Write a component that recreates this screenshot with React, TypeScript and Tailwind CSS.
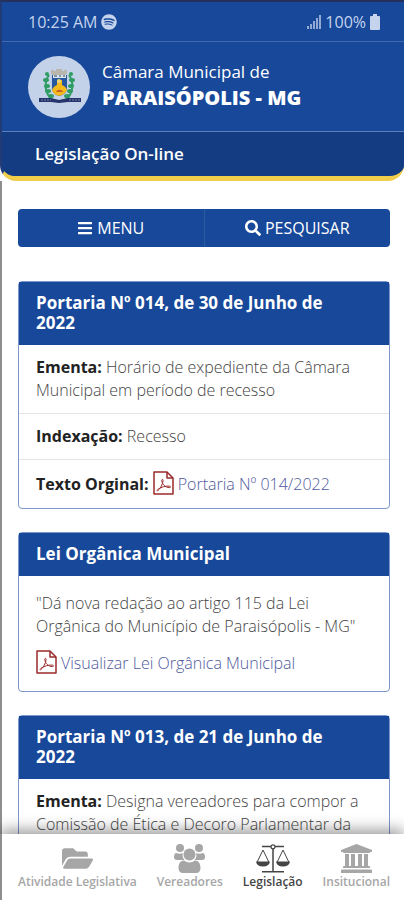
import { ReactNode } from 'react';
import { FaBars, FaFolderOpen, FaSearch, FaSpotify } from 'react-icons/fa';

interface IconProps {
  className?: string;
}

const SignalIcon = ({ className }: IconProps) => (
  <svg viewBox="0 0 14 14" className={className} fill="currentColor">
    <rect x="0" y="11" width="2" height="3" />
    <rect x="3" y="9" width="2" height="5" />
    <rect x="6" y="6" width="2" height="8" />
    <rect x="9" y="3" width="2" height="11" />
    <rect x="12" y="0" width="2" height="14" />
  </svg>
);

const BatteryIcon = ({ className }: IconProps) => (
  <svg viewBox="0 0 10 16" className={className} fill="currentColor">
    <path d="M3 0h4v2h2a1 1 0 0 1 1 1v12a1 1 0 0 1-1 1H1a1 1 0 0 1-1-1V3a1 1 0 0 1 1-1h2z" />
  </svg>
);

const PdfIcon = ({ className }: IconProps) => (
  <svg viewBox="0 0 21 24" className={className} fill="none" stroke="currentColor" strokeWidth="1.5" strokeLinejoin="round">
    <path d="M1 1h13l6 6v16H1z" />
    <path d="M14 1v6h6" />
    <path
      strokeWidth="1"
      d="M4.500 20c2.500-1.800 5-6 5.600-10.500.2-1.400-1.500-1.400-1.300 0 .5 4 3.600 7 7.700 7.100 1.400 0 1.400-1.400 0-1.500-4-.3-8.500 1-11.400 3.100-1 .8-1.200 1.400-.6 1.800z"
    />
  </svg>
);

const GroupIcon = ({ className }: IconProps) => (
  <svg viewBox="0 0 31 29" className={className} fill="currentColor">
    <circle cx="6" cy="4" r="4" />
    <circle cx="25" cy="4" r="4" />
    <path d="M2.500 9C4 10 7 10 8.800 9 8.200 12 8.800 14 10.500 16H3c-2 0-3-1-3-3 0-2 .7-4 2.500-4z" />
    <path d="M28.500 9C27 10 24 10 22.200 9c.6 3 0 5-1.700 7H28c2 0 3-1 3-3 0-2-.7-4-2.500-4z" />
    <circle cx="15.500" cy="10.500" r="6" />
    <path d="M10 16.500c3.500 2.600 7.500 2.600 11 0 3.500 0 5.500 3 5.500 7.500 0 3-1.700 5-4.500 5H9c-2.800 0-4.500-2-4.500-5 0-4.500 2-7.500 5.500-7.500z" />
  </svg>
);

const ScaleIcon = ({ className }: IconProps) => (
  <svg viewBox="0 0 34 29" className={className} fill="none" stroke="currentColor">
    <path strokeWidth="1.500" d="M6 2.500h9M19 2.500h9M17 5v22.500M6 27.800h22" />
    <circle cx="17" cy="2.800" r="2" strokeWidth="1.200" />
    <path d="M7 6 1.200 18M7 6l5.800 12M27 6l-5.800 12M27 6l5.800 12" />
    <path fill="currentColor" stroke="none" d="M0 17.500h14c-.5 3.300-3 5-7 5s-6.500-1.700-7-5zM20 17.500h14c-.5 3.300-3 5-7 5s-6.500-1.700-7-5z" />
  </svg>
);

const BankIcon = ({ className }: IconProps) => (
  <svg viewBox="0 0 31 29" className={className} fill="currentColor">
    <path d="M15.500 0 31 6v2h-2q0 1-1 1H3Q2 9 2 8H0V6z" />
    <path d="M4 10h4v12h2V10h4v12h3V10h4v12h2V10h4v12h1q1 0 1 1v1H2v-1q0-1 1-1h1z" />
    <path d="M1 25.500h29q1 0 1 1V29H0v-2.500q0-1 1-1z" />
  </svg>
);

const CrestIcon = ({ className }: IconProps) => (
  <svg viewBox="0 0 62 62" className={className}>
    <path d="M23 17v-3h3v1h2v-2h6v2h2v-1h3v3l-1 2H24z" fill="#b9b6ae" />
    <path d="M21 19c-5 7-5 18 4 26M41 19c5 7 5 18-4 26" fill="none" stroke="#2f9d63" strokeWidth="2" />
    <g fill="#2f9d63">
      <ellipse cx="19" cy="18" rx="2" ry="2" />
      <ellipse cx="18" cy="24" rx="3" ry="2" />
      <ellipse cx="19" cy="30" rx="3" ry="2" />
      <ellipse cx="20" cy="35" rx="3" ry="2" />
      <ellipse cx="23" cy="40" rx="3" ry="2" />
      <ellipse cx="43" cy="18" rx="2" ry="2" />
      <ellipse cx="44" cy="24" rx="3" ry="2" />
      <ellipse cx="43" cy="30" rx="3" ry="2" />
      <ellipse cx="42" cy="35" rx="3" ry="2" />
      <ellipse cx="39" cy="40" rx="3" ry="2" />
    </g>
    <path d="M24 19h15v13c0 4-3 7-8 8-4-1-7-4-7-8z" fill="#27589d" />
    <path d="M25 19h13v3H25z" fill="#dce5ef" />
    <path d="M26 20h3M31 20h2M35 20h2" stroke="#29405f" />
    <path d="M24 34c1-3 3-4 5-5v-5h5v5c2 1 4 2 5 5-1 3-4 5-8 6-4-1-6-3-7-6z" fill="#f5b91c" />
    <circle cx="31" cy="25" r="2" fill="#e6d37c" />
    <path d="M28 36c1-3 6-3 7 0z" fill="#c45f2a" />
    <path d="M11 42h12l8 2 9-2h13v4H40l-9 1-8-1H11z" fill="#25356b" />
    <path d="M13 44h10M41 44h11" stroke="#7382ae" strokeDasharray="2 1" />
  </svg>
);

interface CardProps {
  title: string;
  children: ReactNode;
}

const Card = ({ title, children }: CardProps) => (
  <article className="rounded-sm border border-[#7d97cd] bg-white">
    <h2 className="bg-[#17489a] pt-[11px] pr-8 pb-3 pl-[17px] text-[17px] leading-5 font-bold text-white">{title}</h2>
    {children}
  </article>
);

interface FieldProps {
  label: string;
  children: ReactNode;
}

const Field = ({ label, children }: FieldProps) => (
  <p className="border-b border-[#e4e4e4] px-[17px] py-[11px] last:border-b-0 last:pb-3">
    <strong className="font-bold text-[#222]">{label}:</strong> {children}
  </p>
);

const PdfLink = ({ children }: { children: ReactNode }) => (
  <a href="#pdf" className="text-[#4f5a9c]">
    <PdfIcon className="mr-1 inline-block h-6 w-[21px] align-[-5px] text-[#9c2b2b]" />
    {children}
  </a>
);

const tabs = [
  { label: 'Atividade Legislativa', icon: <FaFolderOpen className="h-[31px] w-[31px]" />, active: false },
  { label: 'Vereadores', icon: <GroupIcon className="h-[29px] w-[31px]" />, active: false },
  { label: 'Legislação', icon: <ScaleIcon className="h-[29px] w-[34px]" />, active: true },
  { label: 'Insitucional', icon: <BankIcon className="h-[29px] w-[31px]" />, active: false },
];

export default function App() {
  return (
    <div className="flex h-screen flex-col overflow-hidden bg-white font-['Open_Sans',sans-serif]">
      {/* Header */}
      <header className="overflow-hidden rounded-b-[16px] border-t-2 border-b-[5px] border-l-2 border-t-[#25315a] border-b-[#f0cd4b] border-l-[#213b77] bg-[#17489a] text-white">
        <div className="flex h-10 items-center justify-between border-b border-[#4069ae] pr-6 pl-[26px] text-base text-[#c5d3ec]">
          <span className="flex items-center gap-1">
            10:25 AM <FaSpotify className="h-4 w-4" />
          </span>
          <span className="flex items-center gap-1">
            <SignalIcon className="h-3.5 w-3.5 opacity-70" /> 100% <BatteryIcon className="h-4 w-2.5" />
          </span>
        </div>
        <div className="flex h-[90px] items-center gap-3 border-b border-[#5c80bc] pl-[26px]">
          <span className="rounded-full bg-[#c3d2e8]">
            <CrestIcon className="h-[62px] w-[62px]" />
          </span>
          <h1 className="pb-1 text-[17px] leading-[26px]">
            Câmara Municipal de
            <strong className="block text-xl leading-[26px] font-extrabold">PARAISÓPOLIS - MG</strong>
          </h1>
        </div>
        <p className="bg-[#133c82] px-[33px] py-2.5 text-[17px] leading-6 font-semibold">Legislação On-line</p>
      </header>

      {/* Content */}
      <main className="min-h-0 flex-1 overflow-y-auto border-l-2 border-[#8e8e8e] pt-7 pr-3.5 pl-4 text-base leading-[23px] font-light text-[#444] [scrollbar-width:none]">
        <div className="mb-[34px] flex overflow-hidden rounded-sm bg-[#17489a] font-normal text-white">
          <button className="flex h-[38px] flex-1 items-center justify-center gap-1 border-r border-[#2c5a9e]">
            <FaBars className="h-4 w-4" /> MENU
          </button>
          <button className="flex h-[38px] flex-1 items-center justify-center gap-1">
            <FaSearch className="h-4 w-4" /> PESQUISAR
          </button>
        </div>

        <div className="flex flex-col gap-[23px]">
          <Card title="Portaria Nº 014, de 30 de Junho de 2022">
            <Field label="Ementa">Horário de expediente da Câmara Municipal em período de recesso</Field>
            <Field label="Indexação">Recesso</Field>
            <Field label="Texto Orginal">
              <PdfLink>Portaria Nº 014/2022</PdfLink>
            </Field>
          </Card>

          <Card title="Lei Orgânica Municipal">
            <div className="px-[17px] py-4">
              <p className="mb-3">"Dá nova redação ao artigo 115 da Lei Orgânica do Município de Paraisópolis - MG"</p>
              <PdfLink>Visualizar Lei Orgânica Municipal</PdfLink>
            </div>
          </Card>

          <Card title="Portaria Nº 013, de 21 de Junho de 2022">
            <Field label="Ementa">Designa vereadores para compor a Comissão de Ética e Decoro Parlamentar da Câmara Municipal</Field>
          </Card>
        </div>
      </main>

      {/* Bottom tabs */}
      <nav className="relative flex justify-between border-l-2 border-[#8e8e8e] bg-white pt-2 pr-3.5 pb-2.5 pl-4 shadow-[0_-4px_14px_rgba(0,0,0,0.4)]">
        {tabs.map((tab) => (
          <a
            key={tab.label}
            href="#tab"
            className={`flex flex-col items-center text-xs leading-4 font-semibold ${tab.active ? 'text-[#444]' : 'text-[#a6a6a6]'}`}
          >
            <span className="flex h-8 items-center">{tab.icon}</span>
            {tab.label}
          </a>
        ))}
      </nav>
    </div>
  );
}
